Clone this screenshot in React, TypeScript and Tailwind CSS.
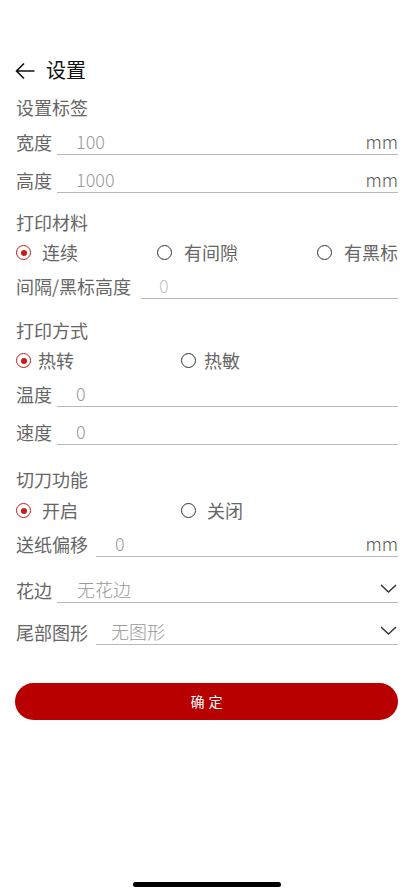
const font = { fontFamily: '"Noto Sans CJK SC", "Noto Sans", sans-serif' };

function Radio({ checked }: { checked?: boolean }) {
  return checked ? (
    <span className="flex h-[15px] w-[15px] shrink-0 items-center justify-center rounded-full border-[1.5px] border-[#c41b1b]">
      <span className="h-[6px] w-[6px] rounded-full bg-[#c41b1b]" />
    </span>
  ) : (
    <span className="h-[15px] w-[15px] shrink-0 rounded-full border-[1.5px] border-[#333333]" />
  );
}

function Field({
  label,
  value,
  unit,
  faint,
  select,
  mt,
  gap = "ml-[5px]",
  pad = "pl-[19px]",
}: {
  label: string;
  value: string;
  unit?: string;
  faint?: boolean;
  select?: boolean;
  mt: string;
  gap?: string;
  pad?: string;
}) {
  return (
    <div className={`flex h-[24px] items-center ${mt}`}>
      <span className="pb-[3px] text-[18px] leading-none text-[#666666]">{label}</span>
      <div className={`flex h-[24px] flex-1 items-center border-b border-[#b8b8b8] pb-[3px] ${gap} ${pad}`}>
        <span className={`flex-1 text-[18px] leading-none font-light ${faint ? "text-[#c4c4c4]" : "text-[#999999]"}`}>
          {value}
        </span>
        {unit && <span className="text-[18px] leading-none font-light text-[#555555]">{unit}</span>}
        {select && (
          <svg width="17" height="9" viewBox="0 0 17 9" className="mr-px mb-[2px]">
            <polyline points="1,1 8.5,8 16,1" fill="none" stroke="#333333" strokeWidth="1.4" />
          </svg>
        )}
      </div>
    </div>
  );
}

function Section({ title, mt }: { title: string; mt: string }) {
  return (
    <div className={`flex h-[32px] items-center pb-[2px] text-[18px] leading-none text-[#666666] ${mt}`}>{title}</div>
  );
}

export default function App() {
  return (
    <div style={font} className="flex h-[896px] w-[414px] flex-col bg-white">
      {/* status bar, white on white in the shot */}
      <div className="flex h-[50px] items-center justify-between px-[26px] pt-[2px] text-[15px] font-semibold text-white">
        <span>11:19</span>
        <span>4G</span>
      </div>

      <div className="flex flex-col px-4">
        <div className="flex h-[42px] items-center">
          <svg width="20" height="18" viewBox="0 0 20 18" className="ml-[-1px]">
            <path d="M19.5 9H1.5M9 1.5L1.5 9L9 16.5" fill="none" stroke="#111111" strokeWidth="1.6" />
          </svg>
          <span className="ml-[11px] pb-[2px] text-[20px] leading-none text-[#111111]">设置</span>
        </div>

        <Section title="设置标签" mt="" />
        <Field label="宽度" value="100" unit="mm" mt="mt-[7px]" />
        <Field label="高度" value="1000" unit="mm" mt="mt-[14px]" />

        <Section title="打印材料" mt="mt-[14px]" />
        <div className="flex h-[28px] items-center pb-[1px] text-[18px] leading-none text-[#666666]">
          <div className="flex w-[142px] items-center gap-[11px]">
            <Radio checked />
            <span className="pb-[2px]">连续</span>
          </div>
          <div className="flex w-[161px] items-center gap-[12px]">
            <Radio />
            <span className="pb-[2px]">有间隙</span>
          </div>
          <div className="flex items-center gap-[12px]">
            <Radio />
            <span className="pb-[2px] whitespace-nowrap">有黑标</span>
          </div>
        </div>
        <Field label="间隔/黑标高度" value="0" faint mt="mt-[8px]" gap="ml-[10px]" pad="pl-[18px]" />

        <Section title="打印方式" mt="mt-[16px]" />
        <div className="flex h-[28px] items-center pb-[1px] text-[18px] leading-none text-[#666666]">
          <div className="flex w-[165px] items-center gap-[7px]">
            <Radio checked />
            <span className="pb-[2px]">热转</span>
          </div>
          <div className="flex items-center gap-[8px]">
            <Radio />
            <span className="pb-[2px]">热敏</span>
          </div>
        </div>
        <Field label="温度" value="0" mt="mt-[8px]" />
        <Field label="速度" value="0" mt="mt-[14px]" />

        <Section title="切刀功能" mt="mt-[19px]" />
        <div className="mt-px flex h-[28px] items-center pb-[1px] text-[18px] leading-none text-[#666666]">
          <div className="flex w-[165px] items-center gap-[11px]">
            <Radio checked />
            <span className="pb-[2px]">开启</span>
          </div>
          <div className="flex items-center gap-[11px]">
            <Radio />
            <span className="pb-[2px]">关闭</span>
          </div>
        </div>
        <Field label="送纸偏移" value="0" unit="mm" mt="mt-[8px]" gap="ml-[8px]" />
        <Field label="花边" value="无花边" select mt="mt-[22px]" pad="pl-[20px]" />
        <Field label="尾部图形" value="无图形" select mt="mt-[18px]" gap="ml-[8px]" pad="pl-[15px]" />

        <button className="mt-[38px] ml-[-1px] flex h-[37px] items-center justify-center rounded-full bg-[#b90000] text-[14px] tracking-[4px] text-white">
          <span className="pl-[4px]">确定</span>
        </button>
      </div>

      <div className="mt-auto mb-[9px] h-[5px] w-[148px] self-center rounded-full bg-black" />
    </div>
  );
}
